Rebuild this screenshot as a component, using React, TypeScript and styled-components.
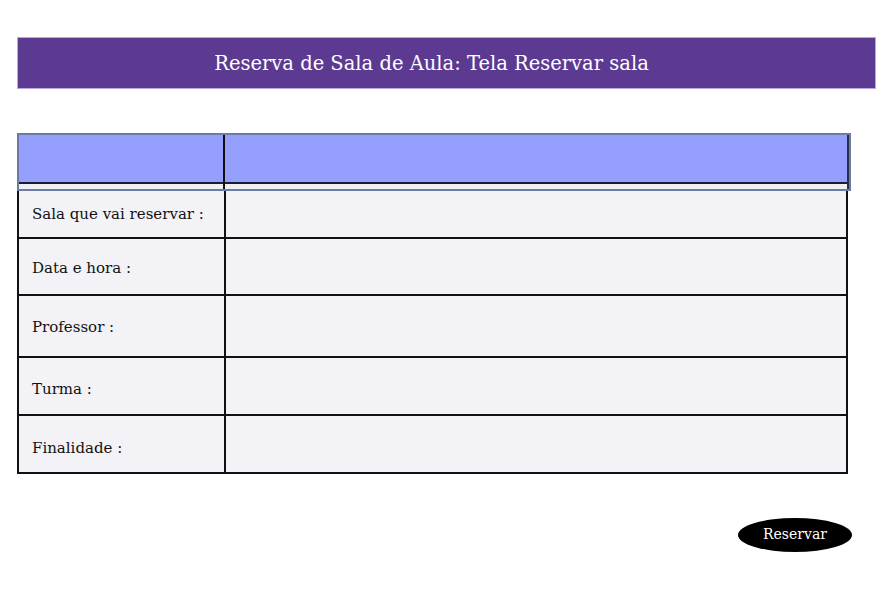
import React, { FC } from "react";
import styled, { createGlobalStyle } from "styled-components";

const GlobalStyle = createGlobalStyle`
    html, body {
        margin: 0;
        padding: 0;
        background: #ffffff;
    }
    body {
        font-family: "DejaVu Serif", "Liberation Serif", serif;
    }
`;

interface FieldRow {
    label: string;
    height: number;
    // how far the label sits below the row centre
    drop: number;
}

const rows: FieldRow[] = [
    { label: "Sala que vai reservar :", height: 48, drop: 0 },
    { label: "Data e hora :", height: 57, drop: 2 },
    { label: "Professor :", height: 62, drop: 2 },
    { label: "Turma :", height: 58, drop: 5 },
    { label: "Finalidade :", height: 58, drop: 8 },
];

const App: FC = () => {
    return (
        <>
            <GlobalStyle />
            <Page>
                <TitleBar>
                    <Title>Reserva de Sala de Aula: Tela Reservar sala</Title>
                </TitleBar>

                <Table>
                    <HeaderRow>
                        <HeaderCol $first>
                            <HeaderFill />
                        </HeaderCol>
                        <HeaderCol>
                            <HeaderFill />
                        </HeaderCol>
                    </HeaderRow>

                    {rows.map(row => (
                        <Row key={row.label} $height={row.height}>
                            <LabelCell $drop={row.drop}>{row.label}</LabelCell>
                            <ValueCell />
                        </Row>
                    ))}
                </Table>

                <Actions>
                    <ReserveButton>Reservar</ReserveButton>
                </Actions>
            </Page>
        </>
    );
};

export default App;

const Page = styled.div`
    width: 892px;
    height: 608px;
    box-sizing: border-box;
    padding: 37px 16px 0 17px;
    display: flex;
    flex-direction: column;
`;

const TitleBar = styled.div`
    height: 52px;
    box-sizing: border-box;
    background-color: #5c3a92;
    border: 1px solid #b9a8dc;
    display: flex;
    align-items: center;
    justify-content: center;
    padding-right: 30px;
`;

const Title = styled.h1`
    margin: 0;
    font-family: "DejaVu Serif", "Liberation Serif", serif;
    font-weight: normal;
    font-size: 19.5px;
    color: #ffffff;
`;

const Table = styled.div`
    margin-top: 44px;
    width: 834px;
    display: flex;
    flex-direction: column;
`;

const HeaderRow = styled.div`
    height: 58px;
    box-sizing: border-box;
    border: 2px solid #6b7ba6;
    background-color: #eef0f6;
    display: grid;
    grid-template-columns: 206px 1fr;
    padding-bottom: 5px;
`;

const HeaderCol = styled.div<{ $first?: boolean }>`
    display: flex;
    flex-direction: column;
    border-right: 2px solid ${p => (p.$first ? "#111111" : "#2a2f45")};
    margin-bottom: -5px;
`;

const HeaderFill = styled.div`
    height: 49px;
    box-sizing: border-box;
    background-color: #949ffe;
    border-bottom: 2px solid #1b1d33;
`;

const Row = styled.div<{ $height: number }>`
    width: 831px;
    height: ${p => p.$height}px;
    box-sizing: border-box;
    display: grid;
    grid-template-columns: 207px 1fr;
    background-color: #f2f2f7;
    border-left: 2px solid #111111;
    border-right: 2px solid #111111;
    border-bottom: 2px solid #111111;
`;

const LabelCell = styled.div<{ $drop: number }>`
    display: flex;
    align-items: center;
    padding-left: 13px;
    padding-top: ${p => p.$drop}px;
    border-right: 2px solid #111111;
    font-family: "DejaVu Serif", "Liberation Serif", serif;
    font-size: 15px;
    color: #111111;
`;

const ValueCell = styled.div``;

const Actions = styled.div`
    margin-top: 44px;
    display: flex;
    justify-content: flex-end;
    padding-right: 24px;
`;

const ReserveButton = styled.button`
    width: 114px;
    height: 34px;
    border: none;
    border-radius: 50%;
    background-color: #000000;
    color: #ffffff;
    font-family: "DejaVu Serif", "Liberation Serif", serif;
    font-size: 14px;
    cursor: pointer;
    padding: 0 0 3px;
`;
